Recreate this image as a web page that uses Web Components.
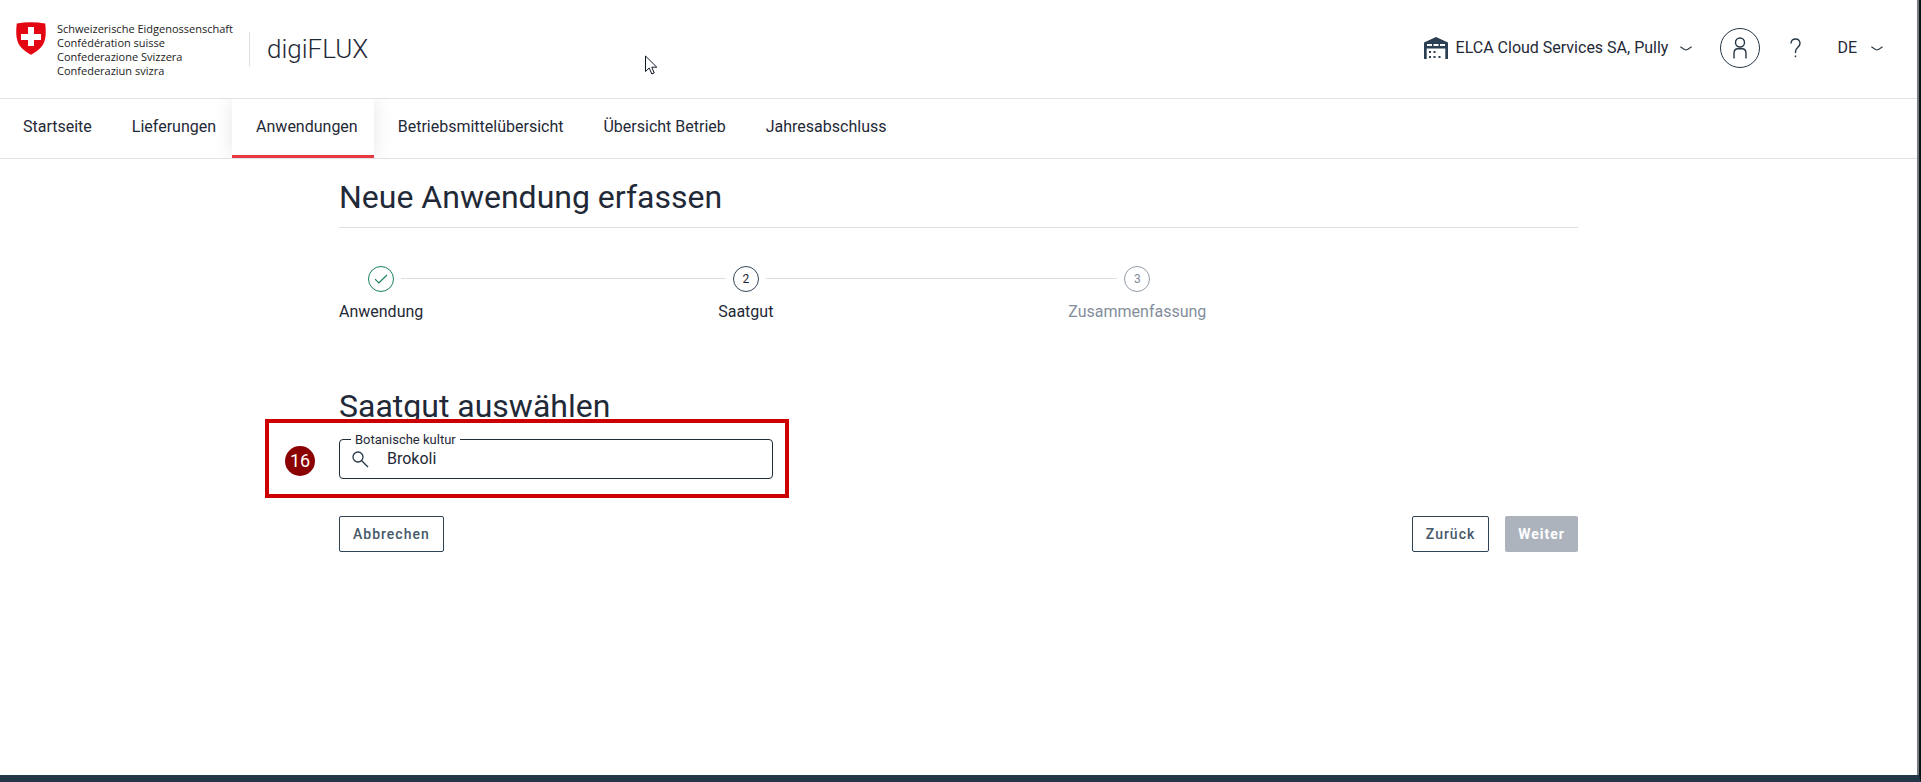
<!DOCTYPE html>
<html lang="de">
<head>
<meta charset="utf-8">
<title>digiFLUX – Neue Anwendung erfassen</title>
<style>
html, body { margin: 0; height: 100%; }
body { font-family: Roboto, "Liberation Sans", sans-serif; font-size: 16px; line-height: 24px; color: #1f2937; background: #fff; }
</style>
</head>
<body>
<digi-app></digi-app>
<script>
function define(name, html) {
  const template = document.createElement('template');
  template.innerHTML = html;
  customElements.define(name, class extends HTMLElement {
    constructor() {
      super();
      this.attachShadow({ mode: 'open' }).append(template.content.cloneNode(true));
    }
  });
}

define('digi-chevron', `
<style>:host{display:block;line-height:0}</style>
<svg width="12" height="5" viewBox="0 0 12 5" fill="none" stroke="#263746" stroke-width="1.1"><path d="M.4.8 4.500 3.500Q6 4.300 7.500 3.500L11.600.8"/></svg>`);

define('confederation-logo', `
<style>
:host{display:flex;align-items:flex-start;gap:11px}
svg{display:block}
p{margin:0;font:11px/14px "Open Sans","Noto Sans",sans-serif;color:#222;white-space:nowrap}
</style>
<svg width="30" height="33" viewBox="0 0 30 33" aria-hidden="true"><path fill="#e30613" d="M.8 1.4Q15-1 29.2 1.4C30 8 30.200 15 28 20.500 25.500 26.500 20 30 15 32.700 10 30 4.500 26.500 2 20.500-.2 15 0 8 .8 1.400Z"/><path fill="#fff" d="M12 5h6v7h7v6h-7v6h-6v-6H5v-6h7z"/></svg>
<p>Schweizerische Eidgenossenschaft<br>Confédération suisse<br>Confederazione Svizzera<br>Confederaziun svizra</p>`);

define('digi-header', `
<style>
:host{display:flex;align-items:center;height:99px;padding:0 34px 0 16px;border-bottom:1px solid #dce2e8;box-sizing:border-box}
confederation-logo{padding-top:2px}
.product{margin-left:16px;border-left:1px solid #dcdfe2;padding-left:17px;font-size:26px;font-weight:300;line-height:34px}
.tools{display:flex;align-items:center;margin-left:auto;padding-bottom:2px}
button{all:unset;display:flex;align-items:center;cursor:pointer}
svg{display:block}
.company{gap:8px}
.company digi-chevron{margin-left:4px}
.user{width:38px;height:38px;border:1px solid #263746;border-radius:50%;justify-content:center;margin-left:28px}
.help{margin-left:30px}
.lang{margin-left:36px;gap:14px}
</style>
<confederation-logo></confederation-logo>
<div class="product">digiFLUX</div>
<div class="tools">
<button class="company"><svg width="24" height="22" viewBox="0 0 24 22" fill="#2b3f52"><path fill-rule="evenodd" d="M0 22V5.500L12 0l12 5.500V22h-2.700V11.500H2.700V22ZM3 7v2h5V7Zm6.500 0v2h5V7Zm6.500 0v2h5V7Z"/><path d="M5 14h2v2H5zM9.500 14h2v2h-2zM5 19h2v2H5zM9.500 19h2v2h-2zM14.500 19h2v2h-2z"/></svg><span>ELCA Cloud Services SA, Pully</span><digi-chevron></digi-chevron></button>
<button class="user" aria-label="Benutzer"><svg width="16" height="22" viewBox="0 0 16 22" fill="none" stroke="#263746" stroke-width="1.400"><circle cx="8" cy="5.500" r="4.500"/><path d="M2 21.500V16.500Q2 11.800 6 11.800H10Q14 11.800 14 16.500V21.500"/></svg></button>
<button class="help" aria-label="Hilfe"><svg width="11" height="20" viewBox="0 0 11 20" fill="none" stroke="#263746" stroke-width="1.400"><path d="M1 5.500Q1 1 5.500 1T10 5.500C10 9 5.500 9.500 5.500 13.500V15M5.500 17.500V19.300"/></svg></button>
<button class="lang"><span>DE</span><digi-chevron></digi-chevron></button>
</div>`);

define('digi-nav', `
<style>
:host{display:block;border-bottom:1px solid #dce2e8}
nav{display:flex;height:59px;margin-left:-1px;overflow:hidden}
a{display:block;padding:16px 16px 16px 24px;line-height:24px;color:inherit;text-decoration:none;border-bottom:3px solid transparent}
a[aria-current]{border-color:#e63a40;box-shadow:0 0 20px rgba(0,0,0,.1)}
</style>
<nav><a href="#">Startseite</a><a href="#">Lieferungen</a><a href="#" aria-current="page">Anwendungen</a><a href="#">Betriebsmittelübersicht</a><a href="#">Übersicht Betrieb</a><a href="#">Jahresabschluss</a></nav>`);

define('digi-step', `
<style>
:host{display:flex;flex-direction:column;gap:8px;text-align:center}
.row{display:flex;align-items:flex-start;gap:7px}
.row::before,.row::after{content:"";flex:1;height:1px;margin-top:12px;background:#dcdedf}
:host([first]) .row::before,:host([last]) .row::after{background:none}
.mark{display:flex;align-items:center;justify-content:center;width:24px;height:24px;border:1px solid #34475a;border-radius:50%;font-size:12px;line-height:24px}
:host([done]) .mark{border-color:#19805e;color:#19805e}
:host([pending]){color:#838e9b}
:host([pending]) .mark{border-color:#939ca7}
</style>
<div class="row"><span class="mark"><slot name="mark"></slot></span></div>
<div><slot></slot></div>`);

define('digi-stepper', `
<style>
:host{display:flex;width:70%}
i{flex:1;height:1px;margin-top:12px;background:#dcdedf}
svg{display:block}
</style>
<digi-step first done><svg slot="mark" width="14" height="10" viewBox="0 0 14 10" fill="none" stroke="#19805e" stroke-width="1.200"><path d="M1 5.200 4.800 9 13 1"/></svg>Anwendung</digi-step><i></i>
<digi-step><span slot="mark">2</span>Saatgut</digi-step><i></i>
<digi-step last pending><span slot="mark">3</span>Zusammenfassung</digi-step>`);

define('digi-search', `
<style>
:host{display:block;position:relative;width:35%}
.field{display:flex;align-items:center;height:40px;padding:0 12px;border:1px solid #1f2d3a;border-radius:4px;box-sizing:border-box}
label{position:absolute;top:-6px;left:12px;padding:0 4px;background:#fff;font-size:13px;line-height:14px}
svg{flex:none;display:block}
input{all:unset;flex:1;min-width:0;margin-left:18px;line-height:24px}
.mark{position:absolute;top:-20px;left:-74px;right:-16px;height:71px;border:4px solid #c00;pointer-events:none}
.num{position:absolute;top:7px;left:-54px;width:30px;height:30px;border-radius:50%;background:#8b0000;color:#fff;font-size:18px;line-height:30px;text-align:center}
</style>
<label for="q">Botanische kultur</label>
<div class="field">
<svg width="17" height="17" viewBox="0 0 17 17" fill="none" stroke="#263746" stroke-width="1.300"><circle cx="6" cy="6" r="5"/><path d="M9.700 9.700 16 16"/></svg>
<input id="q" type="text" value="Brokoli"></div>
<div class="mark"></div><div class="num">16</div>`);

define('digi-button', `
<style>
:host{display:block}
button{display:block;margin:0;height:36px;padding:0 13px;border:1px solid #2f4356;border-radius:2px;background:#fff;color:#46596b;font:500 14px/34px Roboto,sans-serif;letter-spacing:1px}
:host([primary]) button{border:0;background:#acb3bd;color:#fff;font-weight:700}
</style>
<button type="button"><slot></slot></button>`);

define('digi-app', `
<style>
:host{display:flex;flex-direction:column;min-height:100%;box-sizing:border-box;border-bottom:7px solid #243746;border-right:2px solid #0c1519;position:relative}
.page{flex:1;border-right:2px solid #777b7d}
main{max-width:1239px;margin:0 auto;padding:0 32px}
h1,h2{margin:0;font-size:32px;line-height:40px;font-weight:400}
h1{padding:18px 0 10px;border-bottom:1px solid #dcdedf}
digi-stepper{margin-top:38px}
h2{margin-top:62px;padding-bottom:13px}
.actions{display:flex;gap:16px;margin-top:37px}
.actions :first-child{margin-right:auto}
.cursor{position:absolute;left:645px;top:55px}
</style>
<div class="page">
<digi-header></digi-header>
<digi-nav></digi-nav>
<main>
<h1>Neue Anwendung erfassen</h1>
<digi-stepper></digi-stepper>
<h2>Saatgut auswählen</h2>
<digi-search></digi-search>
<div class="actions"><digi-button>Abbrechen</digi-button><digi-button>Zurück</digi-button><digi-button primary>Weiter</digi-button></div>
</main>
</div>
<svg class="cursor" width="13" height="20" viewBox="0 0 13 20" fill="#fff" stroke="#111827" stroke-width="1"><path d="M.5 1V16.500L4.200 13 6.800 19 9.200 18 6.800 12.200H11.800Z"/></svg>`);
</script>
</body>
</html>
